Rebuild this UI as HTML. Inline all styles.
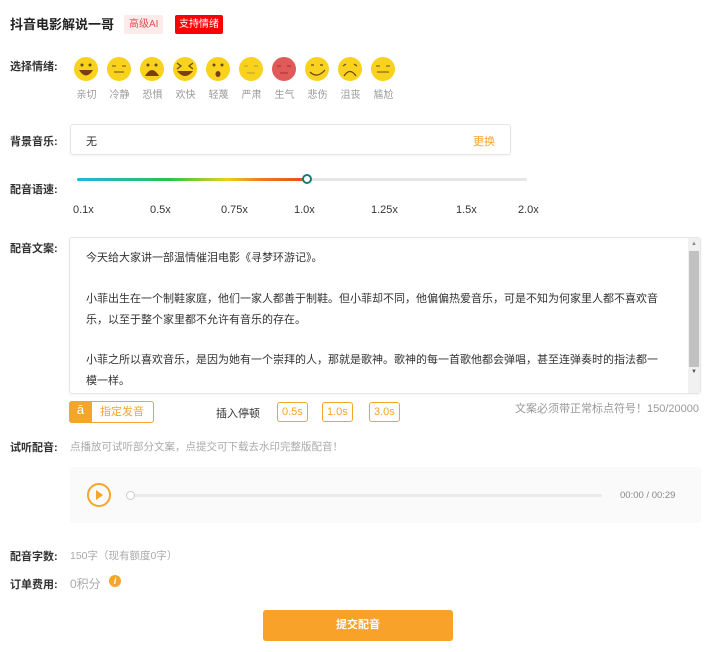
<!DOCTYPE html>
<html><head><meta charset="utf-8"><style>
*{margin:0;padding:0;box-sizing:border-box}
body{width:720px;height:652px;background:#fff;font-family:"Liberation Sans","Noto Sans CJK SC",sans-serif;position:relative;overflow:hidden;color:#333}
.a{position:absolute;white-space:nowrap}
.lbl{font-size:11px;color:#333;font-weight:600}
.el{position:absolute;top:86px;font-size:10px;color:#999;width:33px;text-align:center}
.sl{position:absolute;top:204px;font-size:11px;color:#333}
.tx{position:absolute;left:86px;font-size:11px;color:#333}
.pb{position:absolute;top:402px;height:20px;border:1px solid #f5a42c;border-radius:3px;font-size:11px;color:#f5a42c;line-height:18px;padding:0 4px}
</style></head><body>
<div class="a" style="left:10px;top:14px;font-size:13px;font-weight:bold;color:#222">抖音电影解说一哥</div>
<div class="a" style="left:124px;top:15px;height:19px;padding:0 5px;background:#fdeaea;color:#e25050;font-size:10px;line-height:19px;border-radius:2px">高级AI</div>
<div class="a" style="left:175px;top:15px;height:19px;padding:0 4px;background:#f00;color:#fff;font-size:10px;line-height:19px;border-radius:2px">支持情绪</div>

<div class="a lbl" style="left:10px;top:58px">选择情绪:</div>
<svg style="position:absolute;left:0;top:0" width="400" height="100">
<g transform="translate(86,69)"><circle r="12" fill="#f8d21c"/><circle cx="-4" cy="-4" r="1.5" fill="#6b4a1a"/><circle cx="4" cy="-4" r="1.5" fill="#6b4a1a"/><path d="M-7 1 Q0 12 7 1 Z" fill="#7a3d14"/></g>
<g transform="translate(119,69)"><circle r="12" fill="#f8d21c"/><path d="M-7 -3h4M3 -3h4M-5 3h10" stroke="#8a6a20" stroke-width="1.2"/></g>
<g transform="translate(152,69)"><circle r="12" fill="#f8d21c"/><circle cx="-4" cy="-4" r="1.5" fill="#6b4a1a"/><circle cx="4" cy="-4" r="1.5" fill="#6b4a1a"/><path d="M-7 7 Q0 -5 7 7 Z" fill="#7a3d14"/></g>
<g transform="translate(185,69)"><circle r="12" fill="#f8d21c"/><path d="M-8 -6l4 3-4 3M8 -6l-4 3 4 3" stroke="#6b4a1a" stroke-width="1.3" fill="none"/><path d="M-8 2 Q0 12 8 2 Z" fill="#7a3d14"/></g>
<g transform="translate(218,69)"><circle r="12" fill="#f8d21c"/><circle cx="-4" cy="-4" r="1.5" fill="#6b4a1a"/><circle cx="4" cy="-4" r="1.5" fill="#6b4a1a"/><ellipse cy="5" rx="2.5" ry="3" fill="#7a3d14"/></g>
<g transform="translate(251,69)"><circle r="12" fill="#f8d21c"/><path d="M-7 -3h4M3 -3h4M-4 4h8" stroke="#c09a30" stroke-width="1"/></g>
<g transform="translate(284,69)"><circle r="12" fill="#e05a5a"/><path d="M-7 -3h4M3 -3h4M-4 4h8" stroke="#a03030" stroke-width="1"/></g>
<g transform="translate(317,69)"><circle r="12" fill="#f8d21c"/><path d="M-6 -4h3M3 -4h3" stroke="#6b4a1a" stroke-width="1.3"/><path d="M-7 3 Q0 10 8 1" stroke="#6b4a1a" stroke-width="1.3" fill="none"/></g>
<g transform="translate(350,69)"><circle r="12" fill="#f8d21c"/><path d="M-7 -3l3-2M7 -3l-3-2" stroke="#6b4a1a" stroke-width="1.2"/><path d="M-6 7 Q0 -2 6 7" stroke="#6b4a1a" stroke-width="1.3" fill="none"/></g>
<g transform="translate(383,69)"><circle r="12" fill="#f8d21c"/><path d="M-7 -3h4M3 -3h4M-6 3h12" stroke="#8a6a20" stroke-width="1.2"/></g>
</svg>
<div class="el" style="left:70px">亲切</div><div class="el" style="left:103px">冷静</div><div class="el" style="left:136px">恐惧</div><div class="el" style="left:169px">欢快</div><div class="el" style="left:202px">轻蔑</div><div class="el" style="left:235px">严肃</div><div class="el" style="left:268px">生气</div><div class="el" style="left:301px">悲伤</div><div class="el" style="left:334px">沮丧</div><div class="el" style="left:367px">尴尬</div>

<div class="a lbl" style="left:10px;top:133px">背景音乐:</div>
<div class="a" style="left:70px;top:124px;width:441px;height:31px;border:1px solid #e6e6e6;border-radius:3px;box-shadow:0 1px 2px rgba(0,0,0,.05)"></div>
<div class="a" style="left:86px;top:133px;font-size:11px">无</div>
<div class="a" style="left:473px;top:133px;font-size:11px;color:#f5a42c">更换</div>

<div class="a lbl" style="left:10px;top:181px">配音语速:</div>
<div class="a" style="left:77px;top:178px;width:450px;height:3px;background:#e6e6e6;border-radius:2px"></div>
<div class="a" style="left:77px;top:178px;width:230px;height:3px;border-radius:2px;background:linear-gradient(90deg,#1fb5e8,#22c64a 40%,#e7d21a 65%,#f07a1d 80%,#e64c1e)"></div>
<div class="a" style="left:302px;top:174px;width:10px;height:10px;border-radius:50%;border:2px solid #1f7a7a;background:#fff"></div>
<div class="sl" style="left:73px">0.1x</div><div class="sl" style="left:150px">0.5x</div><div class="sl" style="left:221px">0.75x</div><div class="sl" style="left:294px">1.0x</div><div class="sl" style="left:371px">1.25x</div><div class="sl" style="left:456px">1.5x</div><div class="sl" style="left:518px">2.0x</div>

<div class="a lbl" style="left:10px;top:240px">配音文案:</div>
<div class="a" style="left:69px;top:237px;width:632px;height:157px;border:1px solid #e6e6e6;border-radius:3px;box-shadow:0 1px 2px rgba(0,0,0,.05)"></div>
<div class="a" style="left:688px;top:238px;width:12px;height:155px;background:#f1f1f1"></div>
<div class="a" style="left:689px;top:251px;width:10px;height:116px;background:#c1c1c1"></div>
<div class="a" style="left:691px;top:241px;font-size:6px;color:#888">▲</div>
<div class="a" style="left:691px;top:369px;font-size:6px;color:#555">▼</div>
<div class="tx" style="top:249px">今天给大家讲一部温情催泪电影《寻梦环游记》。</div>
<div class="tx" style="top:290px">小菲出生在一个制鞋家庭，他们一家人都善于制鞋。但小菲却不同，他偏偏热爱音乐，可是不知为何家里人都不喜欢音</div>
<div class="tx" style="top:311px">乐，以至于整个家里都不允许有音乐的存在。</div>
<div class="tx" style="top:351px">小菲之所以喜欢音乐，是因为她有一个崇拜的人，那就是歌神。歌神的每一首歌他都会弹唱，甚至连弹奏时的指法都一</div>
<div class="tx" style="top:372px">模一样。</div>

<div class="a" style="left:69px;top:401px;width:85px;height:22px;border:1px solid #f5a42c;border-radius:3px"></div>
<div class="a" style="left:69px;top:401px;width:23px;height:22px;background:#f5a42c;border-radius:3px 0 0 3px;color:#fff;font-size:13px;text-align:center;line-height:18px">ā</div>
<div class="a" style="left:100px;top:405px;font-size:11px;line-height:14px;color:#f5a42c">指定发音</div>
<div class="a" style="left:216px;top:405px;font-size:11px">插入停顿</div>
<div class="pb" style="left:277px">0.5s</div><div class="pb" style="left:322px">1.0s</div><div class="pb" style="left:369px">3.0s</div>
<div class="a" style="left:515px;top:400px;font-size:11px;color:#999">文案必须带正常标点符号！150/20000</div>

<div class="a lbl" style="left:10px;top:439px">试听配音:</div>
<div class="a" style="left:70px;top:439px;font-size:10.5px;color:#aaa">点播放可试听部分文案，点提交可下载去水印完整版配音！</div>
<div class="a" style="left:70px;top:467px;width:631px;height:56px;background:#fafafa;border-radius:3px"></div>
<div class="a" style="left:87px;top:483px;width:24px;height:24px;border:2px solid #f5a42c;border-radius:50%"></div>
<div class="a" style="left:96px;top:490px;width:0;height:0;border-left:7px solid #f5a42c;border-top:5px solid transparent;border-bottom:5px solid transparent"></div>
<div class="a" style="left:127px;top:494px;width:475px;height:3px;background:#eaeaea;border-radius:2px"></div>
<div class="a" style="left:126px;top:491px;width:9px;height:9px;border:1px solid #ccc;border-radius:50%;background:#fff"></div>
<div class="a" style="left:620px;top:490px;font-size:9.5px;color:#888">00:00 / 00:29</div>

<div class="a lbl" style="left:10px;top:548px">配音字数:</div>
<div class="a" style="left:70px;top:548px;font-size:10.5px;color:#aaa">150字（现有额度0字）</div>
<div class="a lbl" style="left:10px;top:576px">订单费用:</div>
<div class="a" style="left:70px;top:575px;font-size:12px;color:#aaa">0积分</div>
<div class="a" style="left:109px;top:575px;width:12px;height:12px;border-radius:50%;background:#f5a42c;color:#fff;font-size:9px;font-weight:bold;text-align:center;line-height:12px;font-style:italic">i</div>

<div class="a" style="left:263px;top:610px;width:190px;height:31px;background:#f8a22a;border-radius:3px;color:#fff;font-size:11px;font-weight:bold;text-align:center;line-height:31px">提交配音</div>
</body></html>
